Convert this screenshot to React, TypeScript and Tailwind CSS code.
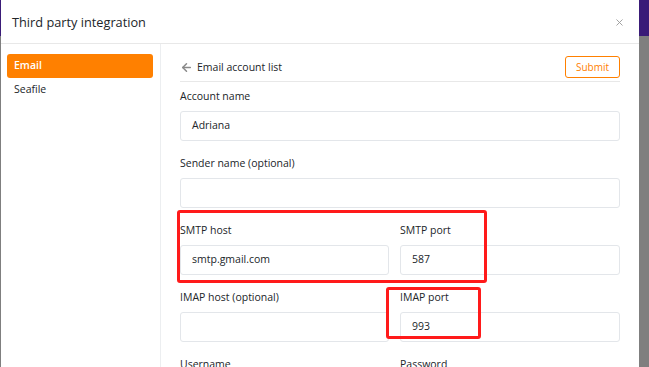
import React from 'react';
import { ArrowLeft, X } from 'lucide-react';

const font = { fontFamily: '"Open Sans", "Noto Sans", sans-serif' };

function Field({ label, value = '' }: { label: string; value?: string }) {
  return (
    <div className="flex flex-col">
      <label className="h-[18px] text-[10.5px] leading-[18px] text-[#212529]">{label}</label>
      <div className="mt-[6px] flex h-[30px] items-center rounded-[3px] border border-[#e3e6ea] px-[11px] text-[10.5px] text-[#212529]">
        {value}
      </div>
    </div>
  );
}

export default function App() {
  return (
    <div className="relative flex h-[367px] w-[649px] overflow-hidden bg-[#7f7f7f]" style={font}>
      <div className="flex w-px shrink-0 flex-col">
        <div className="h-[36px] bg-[#3a1b78]" />
      </div>

      <div className="flex w-[638px] shrink-0 flex-col bg-white">
        <div className="flex h-[44px] shrink-0 items-center justify-between border-b border-[#e8e8e8] pl-[11px] pr-[14px] pt-[2px]">
          <span className="text-[12.75px] text-[#212529]">Third party integration</span>
          <X size={11} strokeWidth={2} className="text-[#9a9a9a]" />
        </div>

        <div className="flex flex-1">
          <div className="w-[160px] shrink-0 border-r border-[#eceef0] pl-[6px] pr-[7px] pt-[10px]">
            <div className="flex h-[24px] items-center rounded-[3px] bg-[#ff8000] px-[7px] text-[10.5px] font-semibold text-white">
              Email
            </div>
            <div className="flex h-[24px] items-center px-[7px] text-[10.5px] text-[#212529]">Seafile</div>
          </div>

          <div className="flex-1 pl-[19px] pr-[19px] pt-[10px]">
            <div className="flex h-[28px] items-center justify-between border-b border-[#e8e8e8]">
              <div className="flex items-center gap-[4px] text-[10.5px] text-[#212529]">
                <ArrowLeft size={13} strokeWidth={2.75} className="text-[#8a8a8a]" />
                <span>Email account list</span>
              </div>
              <button className="mb-px h-[22px] w-[55px] rounded-[3px] border border-[#ff8000] text-[10px] text-[#ff8000]">
                Submit
              </button>
            </div>

            <div className="mt-[5px] flex flex-col gap-[13px]">
              <Field label="Account name" value="Adriana" />
              <Field label="Sender name (optional)" />
              <div className="grid grid-cols-[209px_1fr] gap-x-[11px]">
                <Field label="SMTP host" value="smtp.gmail.com" />
                <Field label="SMTP port" value="587" />
              </div>
              <div className="grid grid-cols-[209px_1fr] gap-x-[11px]">
                <Field label="IMAP host (optional)" />
                <Field label="IMAP port" value="993" />
              </div>
              <div className="grid grid-cols-[209px_1fr] gap-x-[11px]">
                <Field label="Username" />
                <Field label="Password" />
              </div>
            </div>
          </div>
        </div>
      </div>

      <div className="flex w-[10px] shrink-0 flex-col">
        <div className="h-[36px] bg-[#3a1b78]" />
      </div>

      {/* annotation boxes */}
      <div className="absolute left-[177px] top-[210px] h-[73px] w-[310px] rounded-[3px] border-[3px] border-[#ff1a1a]" />
      <div className="absolute left-[386px] top-[287px] h-[52px] w-[95px] rounded-[3px] border-[3px] border-[#ff1a1a]" />
    </div>
  );
}
